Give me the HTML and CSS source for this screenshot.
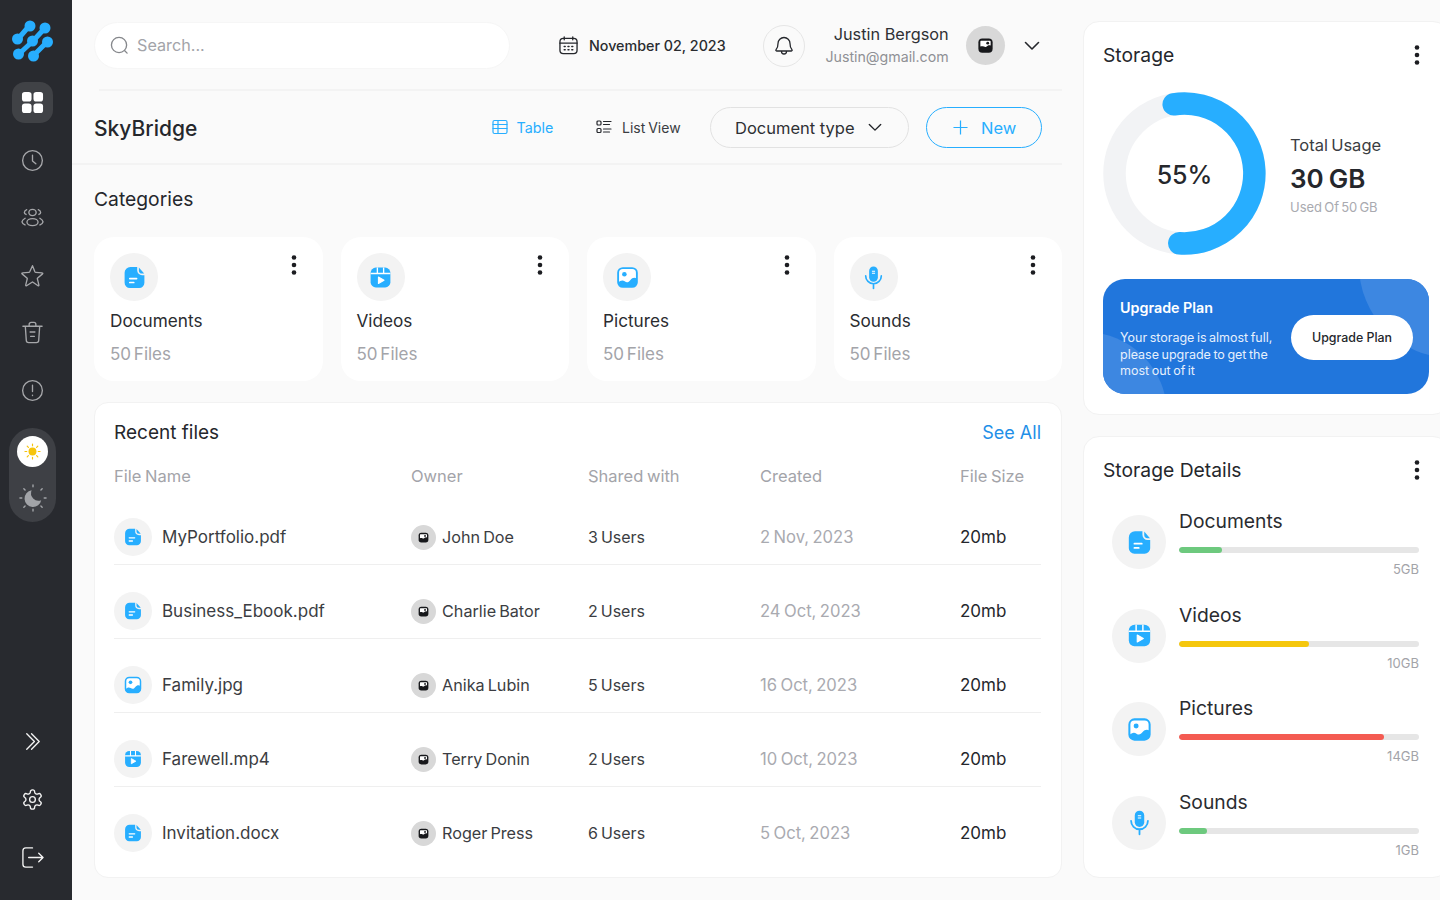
FILE: index.html
```html
<!DOCTYPE html>
<html lang="en">
<head>
<meta charset="utf-8">
<title>SkyBridge</title>
<link rel="stylesheet" href="styles.css">
</head>
<body>
<svg class="sprite" xmlns="http://www.w3.org/2000/svg">
  <symbol id="doc" viewBox="0 0 24 24">
    <path fill="#27aeff" d="M8 2h6.600v3.200a4.600 4.600 0 0 0 4.600 4.600H21.500v7.200a5 5 0 0 1-5 5H7.500a5 5 0 0 1-5-5V7.500A5.500 5.500 0 0 1 8 2z"/>
    <path fill="#27aeff" d="M16.200 2.300l5.100 5.900h-2.100a3 3 0 0 1-3-3z"/>
    <path d="M7.500 13h6.500M7.500 16.800h3.800" stroke="#fff" stroke-width="1.600" stroke-linecap="round" fill="none"/>
  </symbol>
  <symbol id="video" viewBox="0 0 24 24">
    <rect x="2.500" y="2.500" width="19" height="19" rx="5" fill="#27aeff"/>
    <path d="M2.500 8.200h19M9 2.500v5.700M15 2.500v5.700" stroke="#fff" stroke-width="1.300" fill="none"/>
    <path d="M10 11.500l5.400 3.100-5.400 3.100z" fill="#fff" stroke="#fff" stroke-width="1" stroke-linejoin="round"/>
  </symbol>
  <symbol id="picture" viewBox="0 0 24 24">
    <rect x="3" y="3" width="18" height="18" rx="4.500" fill="#fff" stroke="#27aeff" stroke-width="1.800"/>
    <circle cx="9" cy="8.800" r="2.200" fill="#27aeff"/>
    <path fill="#27aeff" d="M3 17c2-2 4.200-2.800 6.300-1.300 2.100 1.400 3.700 1 5.500-1.400 1.900-2.300 4.200-2.700 6.200-1.100V17a4 4 0 0 1-4 4H7a4 4 0 0 1-4-4z"/>
  </symbol>
  <symbol id="mic" viewBox="0 0 24 24">
    <rect x="7.800" y="1.500" width="8.400" height="14.500" rx="4.200" fill="#27aeff"/>
    <path d="M10.500 6h3M10.500 8h3" stroke="#fff" stroke-width="1" fill="none"/>
    <path d="M4.500 10.500a7.500 7.500 0 0 0 15 0M12 18v4.500" stroke="#27aeff" stroke-width="1.600" stroke-linecap="round" fill="none"/>
  </symbol>
  <symbol id="photo" viewBox="0 0 24 24">
    <rect x="3" y="3" width="18" height="18" rx="5" fill="#17181b"/>
    <path d="M6.500 6h11a1 1 0 0 1 1 1v5c-2.500-.8-4 .3-5.500 1.500-1.800 1.300-3.500-1.300-7.500-.3V7a1 1 0 0 1 1-1z" fill="#fff"/>
    <circle cx="14.800" cy="9" r="1.800" fill="#17181b"/>
  </symbol>
  <symbol id="dots" viewBox="0 0 18 24">
    <circle cx="9" cy="4.500" r="2.300" fill="#1c1d21"/>
    <circle cx="9" cy="12" r="2.300" fill="#1c1d21"/>
    <circle cx="9" cy="19.500" r="2.300" fill="#1c1d21"/>
  </symbol>
  <symbol id="chev" viewBox="0 0 16 10">
    <path d="M1.500 1.500L8 8l6.500-6.500" fill="none" stroke="currentColor" stroke-width="1.600" stroke-linecap="round" stroke-linejoin="round"/>
  </symbol>
</svg>

<div class="app">
  <aside class="sidebar">
    <svg class="logo" viewBox="0 0 42 42" aria-label="logo">
      <g stroke="#27aeff" stroke-width="5" stroke-linecap="round">
        <path d="M6 19L18 5M21 21L33 8M7 34L21 21M21 36L35 22"/>
      </g>
      <g fill="#27aeff">
        <circle cx="18" cy="6" r="5.500"/><circle cx="33" cy="8" r="5.500"/>
        <circle cx="5.500" cy="19" r="5.500"/><circle cx="20.500" cy="21" r="5.500"/><circle cx="35.500" cy="22" r="5.500"/>
        <circle cx="6.500" cy="34" r="5.500"/><circle cx="21.500" cy="36" r="5.500"/>
      </g>
    </svg>
    <nav class="nav">
      <div class="nav-item active">
        <svg class="ico" viewBox="0 0 24 24"><g fill="#fff"><rect x="1" y="1" width="10" height="10" rx="3"/><rect x="13" y="1" width="10" height="10" rx="3"/><rect x="1" y="13" width="10" height="10" rx="3"/><rect x="13" y="13" width="10" height="10" rx="3"/></g></svg>
      </div>
      <div class="nav-item"><svg class="ico line" viewBox="0 0 24 24"><circle cx="12" cy="12" r="10.300"/><path d="M12 6.500V12.500l3.500 3"/></svg></div>
      <div class="nav-item"><svg class="ico line" viewBox="0 0 24 24"><ellipse cx="12" cy="6.800" rx="3.800" ry="3.300"/><ellipse cx="12" cy="16.800" rx="5.800" ry="3.700"/><path d="M6 3.800C4.400 4.400 3.500 5.400 3.500 6.800c0 .7.700 1.500 1.800 2M18 3.800c1.600.6 2.500 1.600 2.500 3 0 .7-.7 1.500-1.800 2M4.300 12.800C2.500 13.800 1.200 15.300 1 16.600c.3 1.300 1.600 2.500 3.200 3.200M19.700 12.800c1.800 1 3.100 2.500 3.300 3.800-.3 1.300-1.600 2.500-3.200 3.200"/></svg></div>
      <div class="nav-item"><svg class="ico line" viewBox="0 0 24 24"><path d="M12 1.800l2.500 6.300c.2.400.5.600.9.600l6.700.5c.6 0 .8.700.4 1.100l-5.100 4.300c-.3.300-.4.700-.3 1l1.600 6.500c.1.500-.4.900-.9.600L12.500 19c-.3-.2-.7-.2-1 0l-5.700 3.700c-.5.300-1-.1-.9-.6l1.600-6.500c.1-.3 0-.7-.3-1L1.100 10.300c-.4-.4-.2-1.100.4-1.100l6.700-.5c.4 0 .7-.2.900-.6z"/></svg></div>
      <div class="nav-item"><svg class="ico line" viewBox="0 0 24 24"><path d="M2 5.500h20M8.500 5.500V3.500a2 2 0 0 1 2-2h3a2 2 0 0 1 2 2v2M4.500 5.500l1 14.500a2.500 2.500 0 0 0 2.500 2.500h8a2.500 2.500 0 0 0 2.500-2.500l1-14.500M9.500 11.500h5M10 16h4"/></svg></div>
      <div class="nav-item"><svg class="ico line" viewBox="0 0 24 24"><circle cx="12" cy="12" r="10.300"/><path d="M12 6.500v6.500M12 16.800v.4"/></svg></div>
    </nav>
    <div class="theme">
      <div class="theme-sun">
        <svg class="sun" viewBox="0 0 24 24"><circle cx="12" cy="12" r="5" fill="#f6c40c"/><path d="M12 2.500v2.200M12 19.300v2.200M2.500 12h2.200M19.300 12h2.200M5.300 5.300l1.500 1.500M17.200 17.200l1.500 1.500M5.300 18.700l1.500-1.500M17.200 6.800l1.500-1.500" stroke="#f6c40c" stroke-width="1.500" stroke-linecap="round" fill="none"/></svg>
      </div>
      <svg class="moon" viewBox="0 0 30 30"><path d="M13.500 6.800a9 9 0 1 0 10.300 10.500 8 8 0 0 1-10.300-10.500z" fill="#a2a4a8"/><path d="M15 1v2M15 27v2M1 15h2M27 15h2M5.200 5.200l1.300 1.300M23.500 23.500l1.300 1.300M5.200 24.800l1.300-1.300M23.500 6.500l1.300-1.300" stroke="#a2a4a8" stroke-width="1.500" stroke-linecap="round" fill="none"/></svg>
    </div>
    <div class="side-bottom">
      <div class="nav-item"><svg class="ico white" viewBox="0 0 24 24"><path d="M6 4l8 8-8 8M11 4l8 8-8 8"/></svg></div>
      <div class="nav-item"><svg class="ico white" viewBox="0 0 24 24"><path d="M12.220 2h-.44a2 2 0 0 0-2 2v.18a2 2 0 0 1-1 1.730l-.43.250a2 2 0 0 1-2 0l-.15-.08a2 2 0 0 0-2.730.730l-.22.380a2 2 0 0 0 .730 2.730l.15.100a2 2 0 0 1 1 1.720v.510a2 2 0 0 1-1 1.740l-.15.090a2 2 0 0 0-.730 2.730l.22.380a2 2 0 0 0 2.730.730l.15-.08a2 2 0 0 1 2 0l.43.250a2 2 0 0 1 1 1.730V20a2 2 0 0 0 2 2h.44a2 2 0 0 0 2-2v-.18a2 2 0 0 1 1-1.730l.43-.25a2 2 0 0 1 2 0l.15.08a2 2 0 0 0 2.730-.730l.22-.39a2 2 0 0 0-.730-2.730l-.15-.08a2 2 0 0 1-1-1.740v-.5a2 2 0 0 1 1-1.740l.15-.09a2 2 0 0 0 .730-2.730l-.22-.38a2 2 0 0 0-2.730-.730l-.15.08a2 2 0 0 1-2 0l-.43-.25a2 2 0 0 1-1-1.730V4a2 2 0 0 0-2-2z"/><circle cx="12" cy="12" r="3"/></svg></div>
      <div class="nav-item"><svg class="ico white" viewBox="0 0 24 24"><path d="M12 2H5a3 3 0 0 0-3 3v14a3 3 0 0 0 3 3h7M8 12h15M18.500 7.500L23 12l-4.500 4.500"/></svg></div>
    </div>
  </aside>

  <main class="main">
    <header class="topbar">
      <div class="search">
        <svg class="search-ico" viewBox="0 0 20 20"><circle cx="9.500" cy="9.500" r="8"/><path d="M15.500 15.500l2.500 2.500"/></svg>
        <span>Search...</span>
      </div>
      <div class="date">
        <svg class="cal" viewBox="0 0 20 20"><rect x="1" y="2.500" width="18" height="16" rx="3.500"/><path d="M1 7.500h18M5.500 1v3M14.500 1v3"/><path class="cal-dots" d="M5.500 11h1M9.500 11h1M13.500 11h1M5.500 14.500h1M9.500 14.500h1M13.500 14.500h1"/></svg>
        <span>November 02, 2023</span>
      </div>
      <div class="bell">
        <svg viewBox="0 0 20 20"><path d="M10 1.500a6 6 0 0 0-6 6c0 3.500-.7 5-2 6.300-.4.500-.1 1.200.6 1.200h14.800c.7 0 1-.7.600-1.200-1.300-1.300-2-2.800-2-6.300a6 6 0 0 0-6-6zM7.500 15.500a2.500 2.500 0 0 0 5 0"/></svg>
      </div>
      <div class="user">
        <div class="user-name">Justin Bergson</div>
        <div class="user-mail">Justin@gmail.com</div>
      </div>
      <div class="avatar"><svg viewBox="0 0 24 24"><use href="#photo"/></svg></div>
      <svg class="user-chev" viewBox="0 0 16 10"><use href="#chev"/></svg>
    </header>
    <div class="top-rule"></div>
    <section class="toolbar">
      <h1 class="brand">SkyBridge</h1>
      <div class="view view-table">
        <svg viewBox="0 0 16 16"><rect x="1" y="1.500" width="14" height="13" rx="1.500"/><path d="M1 5.500h14M1 9.500h14M6 1.500v13"/></svg>
        <span>Table</span>
      </div>
      <div class="view view-list">
        <svg viewBox="0 0 16 16"><rect x="1" y="2" width="4" height="4" rx="1"/><rect x="1" y="9.500" width="4" height="4" rx="1"/><path d="M7.500 2.500H15M7.500 5.500h6M7.500 10H15M7.500 13h6"/></svg>
        <span>List View</span>
      </div>
      <div class="pill pill-type"><span>Document type</span><svg viewBox="0 0 16 10"><use href="#chev"/></svg></div>
      <div class="pill pill-new"><svg viewBox="0 0 16 16"><path d="M8 .5v15M.5 8h15"/></svg><span>New</span></div>
    </section>

    <h2 class="section-title">Categories</h2>
    <section class="cats">
      <article class="cat">
        <div class="cat-head"><div class="disc"><svg viewBox="0 0 24 24"><use href="#doc"/></svg></div><svg class="dots" viewBox="0 0 18 24"><use href="#dots"/></svg></div>
        <div class="cat-name">Documents</div><div class="cat-count">50 Files</div>
      </article>
      <article class="cat">
        <div class="cat-head"><div class="disc"><svg viewBox="0 0 24 24"><use href="#video"/></svg></div><svg class="dots" viewBox="0 0 18 24"><use href="#dots"/></svg></div>
        <div class="cat-name">Videos</div><div class="cat-count">50 Files</div>
      </article>
      <article class="cat">
        <div class="cat-head"><div class="disc"><svg viewBox="0 0 24 24"><use href="#picture"/></svg></div><svg class="dots" viewBox="0 0 18 24"><use href="#dots"/></svg></div>
        <div class="cat-name">Pictures</div><div class="cat-count">50 Files</div>
      </article>
      <article class="cat">
        <div class="cat-head"><div class="disc"><svg viewBox="0 0 24 24"><use href="#mic"/></svg></div><svg class="dots" viewBox="0 0 18 24"><use href="#dots"/></svg></div>
        <div class="cat-name">Sounds</div><div class="cat-count">50 Files</div>
      </article>
    </section>

    <section class="recent">
      <div class="recent-head"><h2 class="recent-title">Recent files</h2><a class="see-all">See All</a></div>
      <div class="cols row-grid"><span>File Name</span><span>Owner</span><span>Shared with</span><span>Created</span><span>File Size</span></div>
      <div class="rows">
        <div class="row row-grid">
          <div class="file"><div class="disc small"><svg viewBox="0 0 24 24"><use href="#doc"/></svg></div><span>MyPortfolio.pdf</span></div>
          <div class="owner"><div class="face"><svg viewBox="0 0 24 24"><use href="#photo"/></svg></div><span>John Doe</span></div>
          <div class="cell shared">3 Users</div><div class="cell muted">2 Nov, 2023</div><div class="cell dark">20mb</div>
        </div>
        <div class="row row-grid">
          <div class="file"><div class="disc small"><svg viewBox="0 0 24 24"><use href="#doc"/></svg></div><span>Business_Ebook.pdf</span></div>
          <div class="owner"><div class="face"><svg viewBox="0 0 24 24"><use href="#photo"/></svg></div><span>Charlie Bator</span></div>
          <div class="cell shared">2 Users</div><div class="cell muted">24 Oct, 2023</div><div class="cell dark">20mb</div>
        </div>
        <div class="row row-grid">
          <div class="file"><div class="disc small"><svg viewBox="0 0 24 24"><use href="#picture"/></svg></div><span>Family.jpg</span></div>
          <div class="owner"><div class="face"><svg viewBox="0 0 24 24"><use href="#photo"/></svg></div><span>Anika Lubin</span></div>
          <div class="cell shared">5 Users</div><div class="cell muted">16 Oct, 2023</div><div class="cell dark">20mb</div>
        </div>
        <div class="row row-grid">
          <div class="file"><div class="disc small"><svg viewBox="0 0 24 24"><use href="#video"/></svg></div><span>Farewell.mp4</span></div>
          <div class="owner"><div class="face"><svg viewBox="0 0 24 24"><use href="#photo"/></svg></div><span>Terry Donin</span></div>
          <div class="cell shared">2 Users</div><div class="cell muted">10 Oct, 2023</div><div class="cell dark">20mb</div>
        </div>
        <div class="row row-grid last">
          <div class="file"><div class="disc small"><svg viewBox="0 0 24 24"><use href="#doc"/></svg></div><span>Invitation.docx</span></div>
          <div class="owner"><div class="face"><svg viewBox="0 0 24 24"><use href="#photo"/></svg></div><span>Roger Press</span></div>
          <div class="cell shared">6 Users</div><div class="cell muted">5 Oct, 2023</div><div class="cell dark">20mb</div>
        </div>
      </div>
    </section>
  </main>

  <aside class="right">
    <section class="panel storage">
      <div class="panel-head"><h2 class="panel-title">Storage</h2><svg class="dots" viewBox="0 0 18 24"><use href="#dots"/></svg></div>
      <div class="usage">
        <div class="donut">
          <svg viewBox="0 0 163 163">
            <circle cx="81.500" cy="81.500" r="70" fill="none" stroke="#f2f3f5" stroke-width="22.500"/>
            <path d="M70.700 12.300A70 70 0 1 1 76.300 151.300" fill="none" stroke="#27aeff" stroke-width="22.500" stroke-linecap="round"/>
          </svg>
          <span class="donut-label">55%</span>
        </div>
        <div class="usage-text">
          <div class="usage-a">Total Usage</div>
          <div class="usage-b">30 GB</div>
          <div class="usage-c">Used Of 50 GB</div>
        </div>
      </div>
      <div class="upgrade">
        <span class="blob blob-a"></span><span class="blob blob-b"></span>
        <div class="upgrade-text">
          <div class="upgrade-title">Upgrade Plan</div>
          <p class="upgrade-desc">Your storage is almost full, please upgrade to get the most out of it</p>
        </div>
        <div class="upgrade-btn">Upgrade Plan</div>
      </div>
    </section>

    <section class="panel details">
      <div class="panel-head"><h2 class="panel-title">Storage Details</h2><svg class="dots" viewBox="0 0 18 24"><use href="#dots"/></svg></div>
      <div class="items">
        <div class="item">
          <div class="disc large"><svg viewBox="0 0 24 24"><use href="#doc"/></svg></div>
          <div class="item-body"><div class="item-name">Documents</div><div class="track"><div class="fill f-green w-doc"></div></div><div class="item-size">5GB</div></div>
        </div>
        <div class="item">
          <div class="disc large"><svg viewBox="0 0 24 24"><use href="#video"/></svg></div>
          <div class="item-body"><div class="item-name">Videos</div><div class="track"><div class="fill f-yellow w-vid"></div></div><div class="item-size">10GB</div></div>
        </div>
        <div class="item">
          <div class="disc large"><svg viewBox="0 0 24 24"><use href="#picture"/></svg></div>
          <div class="item-body"><div class="item-name">Pictures</div><div class="track"><div class="fill f-red w-pic"></div></div><div class="item-size">14GB</div></div>
        </div>
        <div class="item">
          <div class="disc large"><svg viewBox="0 0 24 24"><use href="#mic"/></svg></div>
          <div class="item-body"><div class="item-name">Sounds</div><div class="track"><div class="fill f-green w-snd"></div></div><div class="item-size">1GB</div></div>
        </div>
      </div>
    </section>
  </aside>
</div>
</body>
</html>
```

FILE: styles.css
```css
* { box-sizing: border-box; }
html, body { margin: 0; padding: 0; height: 900px; overflow: hidden; }
body { font-family: Inter, "Liberation Sans", sans-serif; color: #25272c; background: #fafafa; }
h1, h2, p { margin: 0; font-weight: 500; }
.sprite { position: absolute; width: 0; height: 0; }
.app { display: flex; width: 1440px; height: 900px; overflow: hidden; }

/* sidebar */
.sidebar { flex: none; width: 72px; height: 900px; background: #282a2f; display: flex; flex-direction: column; align-items: center; padding: 20px 7px 22px 0; }
.logo { width: 42px; height: 42px; margin-bottom: 20px; }
.nav { display: flex; flex-direction: column; gap: 16.600px; }
.nav-item { width: 41px; height: 41px; display: flex; align-items: center; justify-content: center; border-radius: 13px; }
.nav-item.active { background: #404246; }
.ico { width: 23px; height: 23px; }
.ico.line, .ico.white { fill: none; stroke-width: 1.400; stroke-linecap: round; stroke-linejoin: round; }
.ico.line { stroke: #a6a7aa; }
.ico.white { stroke: #f4f4f4; }
.theme { margin-top: 17px; width: 47px; height: 94px; border-radius: 24px; background: #3e4045; display: flex; flex-direction: column; align-items: center; padding-top: 8px; }
.theme-sun { width: 31px; height: 31px; border-radius: 50%; background: #fff; display: flex; align-items: center; justify-content: center; }
.sun { width: 19px; height: 19px; }
.moon { width: 28px; height: 28px; margin-top: 17px; }
.side-bottom { margin-top: auto; display: flex; flex-direction: column; gap: 17px; }

/* main */
.main { flex: none; width: 1011px; padding: 0 21px 0 22px; }
.topbar { height: 90px; display: flex; align-items: center; padding-top: 1px; }
.search { width: 416px; height: 47px; margin-bottom: 1px; border-radius: 24px; background: #fff; border: 1px solid #f6f6f6; display: flex; align-items: center; padding-left: 15px; gap: 8px; color: #a3a4a9; font-size: 16.200px; }
.search-ico { width: 19px; height: 19px; fill: none; stroke: #85878b; stroke-width: 1.400; stroke-linecap: round; }
.date { display: flex; align-items: center; gap: 11px; margin-left: 49px; font-size: 14.300px; font-weight: 500; color: #2a2c30; }
.cal { width: 19px; height: 19px; fill: none; stroke: #25272c; stroke-width: 1.400; stroke-linecap: round; }
.cal-dots { stroke-width: 1.600; }
.bell { width: 42px; height: 42px; margin-left: 37px; border-radius: 50%; border: 1px solid #e6e6e6; display: flex; align-items: center; justify-content: center; }
.bell svg { width: 20px; height: 20px; fill: none; stroke: #25272c; stroke-width: 1.300; stroke-linejoin: round; }
.user { width: 144px; text-align: right; }
.user-name { font-size: 16.300px; line-height: 22px; color: #2e3034; }
.user-mail { font-size: 14.200px; line-height: 24px; color: #8f9095; }
.avatar { width: 39px; height: 39px; margin-left: 17px; border-radius: 50%; background: #d8d8d8; display: flex; align-items: center; justify-content: center; }
.avatar svg { width: 19px; height: 19px; }
.user-chev { width: 16px; height: 10px; margin-left: 19px; color: #25272c; }
.top-rule { height: 2px; margin-left: 5px; background: #f3f3f3; margin-top: -1px; }
.toolbar { height: 74px; margin-left: -22px; padding-left: 22px; display: flex; align-items: center; border-bottom: 2px solid #f3f3f3; }
.brand { font-size: 21px; font-weight: 500; color: #25272c; width: 398px; flex: none; margin-top: 2px; }
.view { display: flex; align-items: center; gap: 10px; font-size: 14.300px; }
.view svg { width: 16px; height: 16px; fill: none; stroke-width: 1.200; stroke-linecap: round; }
.view-table { color: #27aeff; width: 104px; gap: 8.500px; }
.view-table svg { stroke: #27aeff; }
.view-list { color: #3b3d42; width: 114px; font-size: 14px; word-spacing: -1px; }
.view-list svg { stroke: #25272c; }
.pill { height: 41px; border-radius: 21px; display: flex; align-items: center; font-size: 16.500px; flex: none; }
.pill-type { width: 199px; border: 1px solid #e2e2e2; padding-left: 24px; gap: 13px; color: #2e3034; }
.pill-type span, .pill-new span { padding-top: 1px; }
.pill-type svg { width: 14px; height: 9px; color: #25272c; }
.pill-new { width: 116px; margin-left: 17px; border: 1px solid #27aeff; color: #27aeff; padding-left: 26px; gap: 13px; }
.pill-new svg { width: 15px; height: 15px; stroke: #27aeff; stroke-width: 1.300; fill: none; }
.section-title { font-size: 19.300px; font-weight: 400; line-height: 24px; margin-top: 22px; color: #25272c; }
.cats { display: flex; justify-content: space-between; margin-top: 26px; }
.cat { width: 228.500px; height: 144px; background: #fff; border-radius: 20px; padding: 16px 20px 0 16px; }
.cat-head { display: flex; justify-content: space-between; align-items: flex-start; }
.disc { width: 48px; height: 48px; border-radius: 50%; background: #f3f3f3; display: flex; align-items: center; justify-content: center; flex: none; }
.disc svg { width: 25px; height: 25px; }
.disc.small { width: 38px; height: 38px; }
.disc.small svg { width: 20px; height: 20px; }
.disc.large { width: 54px; height: 54px; }
.disc.large svg { width: 27px; height: 27px; }
.dots { width: 18px; height: 24px; flex: none; }
.cat-name { margin-top: 8px; font-size: 17.200px; line-height: 24px; color: #2a2c30; }
.cat-count { margin-top: 9px; font-size: 17px; line-height: 24px; word-spacing: -2px; color: #a3a4a9; }
.recent { margin-top: 21px; height: 476px; background: #fff; border: 1px solid #f2f2f2; border-radius: 14px; padding: 17px 20px 0 19px; }
.recent-head { display: flex; justify-content: space-between; align-items: center; height: 24px; }
.recent-title { font-size: 19px; font-weight: 400; color: #25272c; }
.see-all { font-size: 18px; color: #1f8fe8; }
.row-grid { display: grid; grid-template-columns: 297px 177px 172px 200px 1fr; align-items: center; }
.cols { height: 20px; margin-top: 22px; font-size: 16.500px; word-spacing: -1px; color: #a3a4a9; }
.rows { padding-top: 5px; }
.row { margin-top: 27px; padding-bottom: 8px; border-bottom: 1px solid #efefef; font-size: 17px; color: #3b3d42; }
.row.last { border-bottom: 0; }
.file { display: flex; align-items: center; gap: 10px; }
.owner { display: flex; align-items: center; gap: 6px; font-size: 16.200px; word-spacing: -1.500px; }
.face { width: 25px; height: 25px; border-radius: 50%; background: #d8d8d8; display: flex; align-items: center; justify-content: center; }
.face svg { width: 13px; height: 13px; }
.shared { font-size: 16px; word-spacing: -1.500px; }
.muted { color: #a9aab0; font-size: 16.600px; word-spacing: -1.250px; }
.dark { color: #25272c; }

/* right */
.right { flex: none; width: 366px; padding-top: 21px; display: flex; flex-direction: column; gap: 21px; }
.panel { width: 366px; background: #fff; border: 1px solid #f2f2f2; border-radius: 16px; padding: 21px 19px 0; }
.panel-head { display: flex; justify-content: space-between; align-items: center; height: 24px; padding-right: 3px; }
.panel-title { font-size: 19.300px; font-weight: 400; color: #25272c; }
.storage { height: 394px; }
.usage { display: flex; align-items: center; gap: 24px; margin-top: 25px; }
.donut { position: relative; width: 163px; height: 163px; flex: none; display: block; }
.donut svg { display: block; width: 163px; height: 163px; }
.donut-label { position: absolute; inset: 3px 0 0; display: flex; align-items: center; justify-content: center; font-size: 25px; font-weight: 500; color: #25272c; }
.usage-text { padding-top: 3px; }
.usage-a { font-size: 16.500px; line-height: 22px; word-spacing: -1.500px; color: #3b3d42; }
.usage-b { font-size: 26px; line-height: 36px; font-weight: 600; margin-top: 5px; word-spacing: -1.500px; color: #25272c; }
.usage-c { font-size: 13px; line-height: 18px; margin-top: 1px; word-spacing: -1.500px; color: #a9aab0; }
.upgrade { position: relative; overflow: hidden; margin-top: 24px; width: 326px; height: 115px; border-radius: 22px; background: #2176dc; display: flex; align-items: flex-start; padding-left: 17px; }
.blob { position: absolute; border-radius: 50%; background: #3d87e1; }
.blob-a { left: 256px; top: -107px; width: 186px; height: 186px; }
.blob-b { left: -100px; top: 53px; width: 164px; height: 164px; }
.upgrade-text { position: relative; width: 160px; padding-top: 19px; color: #fff; }
.upgrade-title { font-size: 14.300px; line-height: 20px; font-weight: 600; }
.upgrade-desc { margin-top: 12px; font-size: 12.500px; line-height: 16.500px; font-weight: 400; word-spacing: -1px; color: #e6f0fc; }
.upgrade-btn { position: relative; width: 122px; height: 45px; margin: 36px 16px 0 auto; border-radius: 23px; background: #fff; color: #25272c; font-size: 12.400px; font-weight: 500; display: flex; align-items: center; justify-content: center; }
.details { height: 442px; }
.items { margin-top: 33px; padding: 0 10px 0 9px; display: flex; flex-direction: column; gap: 11.500px; }
.item { display: flex; gap: 13px; height: 82px; }
.item-body { flex: 1; margin-top: -7px; }
.item-name { font-size: 19.300px; line-height: 26px; color: #2a2c30; }
.track { height: 6px; margin-top: 13px; border-radius: 3px; background: #e6e6e6; overflow: hidden; }
.fill { height: 6px; border-radius: 3px; }
.f-green { background: #6dc97e; }
.f-yellow { background: #f5c70d; }
.f-red { background: #f45b52; }
.w-doc { width: 18%; }
.w-vid { width: 54%; }
.w-pic { width: 85.400%; }
.w-snd { width: 11.700%; }
.item-size { margin-top: 7px; font-size: 13px; line-height: 18px; text-align: right; color: #a3a4a9; }
```
